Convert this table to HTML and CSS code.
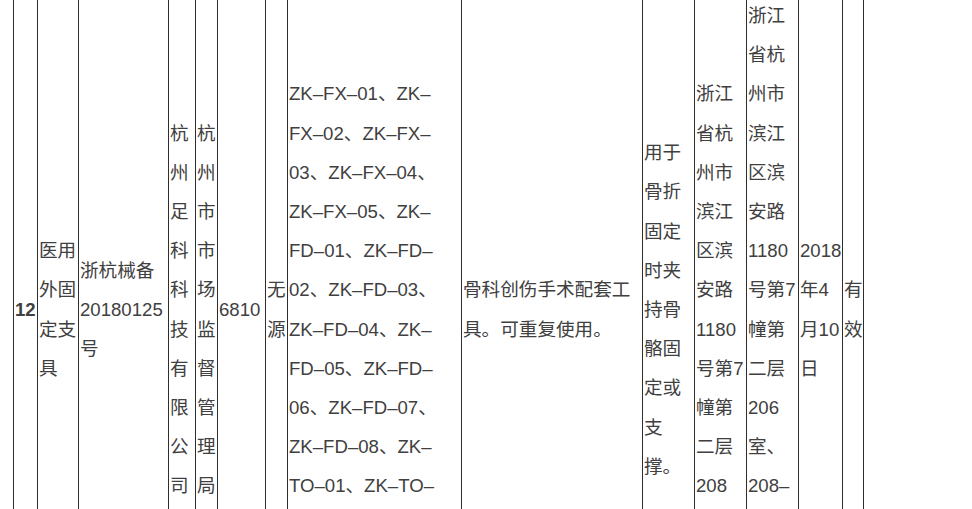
FILE: index.html
```html
<!DOCTYPE html>
<html lang="zh-CN">
<head>
<meta charset="utf-8">
<title>医疗器械备案</title>
<link rel="stylesheet" href="styles.css">
</head>
<body>
<table class="reg">
  <colgroup>
    <col class="c-no">
    <col class="c-name">
    <col class="c-code">
    <col class="c-firm">
    <col class="c-dept">
    <col class="c-cat">
    <col class="c-src">
    <col class="c-model">
    <col class="c-desc">
    <col class="c-use">
    <col class="c-addr">
    <col class="c-addr">
    <col class="c-date">
    <col class="c-state">
  </colgroup>
  <tbody>
    <tr>
      <td class="no">12</td>
      <td>医用外固定支具</td>
      <td>浙杭械备20180125号</td>
      <td>杭州足科科技有限公司</td>
      <td>杭州市市场监督管理局</td>
      <td>6810</td>
      <td>无源</td>
      <td>ZK–FX–01、ZK–FX–02、ZK–FX–03、ZK–FX–04、ZK–FX–05、ZK–FD–01、ZK–FD–02、ZK–FD–03、ZK–FD–04、ZK–FD–05、ZK–FD–06、ZK–FD–07、ZK–FD–08、ZK–TO–01、ZK–TO–02、ZK–TO–03</td>
      <td>骨科创伤手术配套工具。可重复使用。</td>
      <td>用于骨折固定时夹持骨骼固定或支撑。</td>
      <td>浙江省杭州市滨江区滨安路1180号第7幢第二层208室</td>
      <td>浙江省杭州市滨江区滨安路1180号第7幢第二层206室、208–210、212室</td>
      <td>2018年4月10日</td>
      <td>有效</td>
    </tr>
  </tbody>
</table>
</body>
</html>
```

FILE: styles.css
```css
html, body {
  margin: 0;
  padding: 0;
  background: #ffffff;
}

body {
  overflow: hidden;
  font-family: "Liberation Sans", "Noto Sans CJK SC", sans-serif;
  font-size: 18.6px;
  line-height: 39.2px;
  color: #404040;
}

.reg {
  table-layout: fixed;
  border-collapse: collapse;
  width: 851px;
  margin: -5px 0 0 13px;
}

.reg td {
  border: 1px solid #2e2e2e;
  padding: 0 1px;
  vertical-align: middle;
  text-align: left;
  word-break: normal;
}

.reg td.no {
  font-weight: bold;
}

.c-no    { width: 24px; }
.c-name  { width: 41px; }
.c-code  { width: 90px; }
.c-firm  { width: 27px; }
.c-dept  { width: 22px; }
.c-cat   { width: 48px; }
.c-src   { width: 22px; }
.c-model { width: 174px; }
.c-desc  { width: 181px; }
.c-use   { width: 52px; }
.c-addr  { width: 52px; }
.c-date  { width: 44px; }
.c-state { width: 21px; }
```
